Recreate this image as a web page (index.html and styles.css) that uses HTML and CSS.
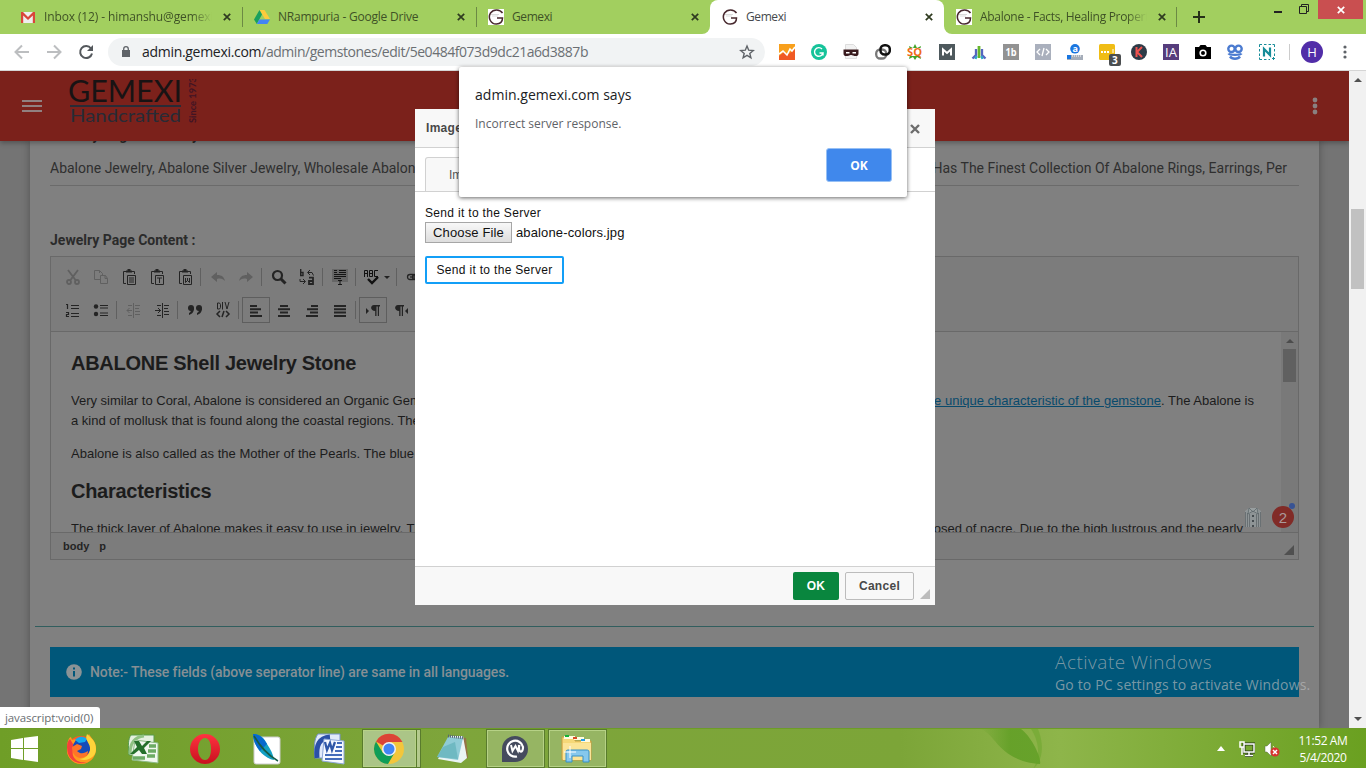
FILE: index.html
```html
<!DOCTYPE html>
<html lang="en">
<head>
<meta charset="utf-8">
<title>Gemexi</title>
<link rel="stylesheet" href="styles.css">
</head>
<body>
<div class="screen">
  <div class="tabs">
    <div class="tab">
      <svg class="fav" viewBox="0 0 16 16"><path d="M1 3h14v11H1z" fill="#eee"/><path d="M1 3h2l5 5 5-5h2v11h-2.200V6.500L8 11 3.200 6.500V14H1z" fill="#d9453a"/></svg>
      <span class="tab-title t1">Inbox (12) - himanshu@gemexi.com</span><svg class="x" viewBox="0 0 8 8"><path d="M.8.8l6.400 6.400M7.200.8L.8 7.200"/></svg>
    </div>
    <div class="tab sep">
      <svg class="fav" viewBox="0 0 16 16"><path d="M5.500 1h5l5.500 9h-5z" fill="#fecb3c"/><path d="M5.500 1L0 10.500 2.800 15 8 5.600z" fill="#18a05e"/><path d="M5.300 10.500H16L13.300 15H2.800z" fill="#4285f4"/></svg>
      <span class="tab-title t2">NRampuria - Google Drive</span><svg class="x" viewBox="0 0 8 8"><path d="M.8.8l6.400 6.400M7.200.8L.8 7.200"/></svg>
    </div>
    <div class="tab sep">
      <svg class="fav w" viewBox="0 0 16 16"><path d="M0 0h16v16H0z" fill="#fff"/><path d="M14.500 4C12 0 5.500-.3 2.500 4-.5 9 3 15.300 8.500 15c3.500-.2 6-2.500 6-6H9" fill="none" stroke="#47282e" stroke-width="1.500"/><path d="M3 5.500h8M4 7h6" stroke="#ccc" stroke-width=".7"/></svg>
      <span class="tab-title t3">Gemexi</span><svg class="x" viewBox="0 0 8 8"><path d="M.8.8l6.400 6.400M7.200.8L.8 7.200"/></svg>
    </div>
    <div class="tab active">
      <svg class="fav w" viewBox="0 0 16 16"><path d="M14.500 4C12 0 5.500-.3 2.500 4-.5 9 3 15.300 8.500 15c3.500-.2 6-2.500 6-6H9" fill="none" stroke="#47282e" stroke-width="1.500"/><path d="M3 5.500h8M4 7h6" stroke="#ccc" stroke-width=".7"/></svg>
      <span class="tab-title t4">Gemexi</span><svg class="x" viewBox="0 0 8 8"><path d="M.8.8l6.400 6.400M7.200.8L.8 7.200"/></svg>
    </div>
    <div class="tab last">
      <svg class="fav w" viewBox="0 0 16 16"><path d="M0 0h16v16H0z" fill="#fff"/><path d="M14.500 4C12 0 5.500-.3 2.500 4-.5 9 3 15.300 8.500 15c3.500-.2 6-2.500 6-6H9" fill="none" stroke="#47282e" stroke-width="1.500"/><path d="M3 5.500h8M4 7h6" stroke="#ccc" stroke-width=".7"/></svg>
      <span class="tab-title t5">Abalone - Facts, Healing Properties</span><svg class="x" viewBox="0 0 8 8"><path d="M.8.8l6.400 6.400M7.200.8L.8 7.200"/></svg>
    </div>
    <svg class="plus" viewBox="0 0 12 12"><path d="M6 0v12M0 6h12"/></svg>
    <div class="win">
      <svg class="wmin" viewBox="0 0 8 2"><path d="M0 0h8v2H0z" fill="#222"/></svg>
      <svg class="wres" viewBox="0 0 10 10"><path d="M.5 2.500h7v7h-7zM2.500 2.500v-2h7v7h-2" fill="none" stroke="#222"/></svg>
      <div class="wclose"><svg viewBox="0 0 8 8"><path d="M.8.8l6.400 6.400M7.200.8L.8 7.200" stroke="#fff" stroke-width="1.700"/></svg></div>
    </div>
  </div>

  <div class="bar">
    <svg class="nav" viewBox="0 0 16 16"><path d="M15 8H2M8 1.500L1.500 8 8 14.500" fill="none" stroke="#bcbec0" stroke-width="2"/></svg>
    <svg class="nav" viewBox="0 0 16 16"><path d="M1 8h13M8 1.500L14.500 8 8 14.500" fill="none" stroke="#bcbec0" stroke-width="2"/></svg>
    <svg class="nav" viewBox="0 0 16 16"><path d="M13 4.500A6 6 0 1 0 14 9.500" fill="none" stroke="#54585c" stroke-width="2"/><path d="M15 1v6H9z" fill="#54585c"/></svg>
    <div class="omni">
      <svg class="lock" viewBox="0 0 8 12"><path d="M0 4h8v7H0z" fill="#5f6368"/><path d="M1.700 5V3a2.300 2.300 0 0 1 4.600 0v2" fill="none" stroke="#5f6368" stroke-width="1.300"/></svg>
      <span class="url"><b>admin.gemexi.com</b>/admin/gemstones/edit/5e0484f073d9dc21a6d3887b</span>
      <svg class="star" viewBox="0 0 16 16"><path d="M8 2l1.700 4.200 4.600.3-3.500 2.900 1.100 4.400L8 11.400l-3.900 2.400 1.100-4.400L1.700 6.500l4.600-.3z" fill="none" stroke="#5f6368" stroke-width="1.400"/></svg>
    </div>
    <div class="exts">
      <svg viewBox="0 0 16 16"><path d="M0 0h16v16H0z" fill="#f8a01c"/><path d="M0 12l5-4 3 3 8-6v11H0z" fill="#f05a24"/><path d="M0 10l4-3 4 4 3-6 2 2 3-4" fill="none" stroke="#fff" stroke-width="1.600"/></svg>
      <svg viewBox="0 0 16 16"><circle cx="8" cy="8" r="8" fill="#15c39a"/><path d="M11 5a4.300 4.300 0 1 0 1 4H8.500M12 9v2.500" fill="none" stroke="#fff" stroke-width="1.400"/></svg>
      <svg viewBox="0 0 16 16"><path d="M2.500.5h8l3 3v11h-11z" fill="#f2f2f2" stroke="#ddd"/><path d="M.5 5.500h15v4c0 2-1 2.500-3 2.500-3 0-3-1-4.500-1s-1.500 1-4.500 1c-2 0-3-.5-3-2.500z" fill="#381a1d"/><path d="M3 8h3.500v1.500H3zM9.500 8H13v1.500H9.500z" fill="#fff"/></svg>
      <svg viewBox="0 0 16 16" fill="none"><rect x="1.200" y="5.500" width="10" height="9" rx="4" stroke="#777" stroke-width="2.300"/><rect x="5.500" y="1.300" width="9.300" height="9.300" rx="4" stroke="#111" stroke-width="2.500"/></svg>
      <svg viewBox="0 0 16 16"><path d="M2 2l4 2 2-4 2 4 4-2-1 4H3zM3 11h10l1 4-4-2-2 3-2-3-4 2z" fill="#43a329"/><path d="M1 4h14v8H1z" fill="#fff"/><text x="0" y="12" font-size="11" font-weight="bold" fill="#f06a17" textLength="15" lengthAdjust="spacingAndGlyphs">SQ</text></svg>
      <svg viewBox="0 0 16 16"><path d="M0 0h16v16H0z" fill="#4e595d"/><path d="M4 11.500V5.500L8 9l4-3.500v6" fill="none" stroke="#fff" stroke-width="2"/></svg>
      <svg viewBox="0 0 16 16" fill="none" stroke-width="2.300"><path d="M5 5v6l-3.500 3.500" stroke="#5665c0"/><path d="M11 5v6l3.500 3.500" stroke="#5665c0"/><path d="M8 2v12" stroke="#65b62c" stroke-width="2.800"/><path d="M5.500 12l-1 3M10.500 12l1 3" stroke="#31a8c9"/></svg>
      <svg viewBox="0 0 16 16"><path d="M0 0h16v16H0z" fill="#929292"/><text x="2.500" y="12" font-size="11" font-weight="bold" fill="#fff" textLength="11" lengthAdjust="spacingAndGlyphs">1b</text></svg>
      <svg viewBox="0 0 16 16"><path d="M0 0h16v16H0z" fill="#aab0bd"/><path d="M5 5L2 8l3 3M11 5l3 3-3 3M9 4l-2 8" fill="none" stroke="#fff" stroke-width="1.300"/></svg>
      <svg viewBox="0 0 16 16"><circle cx="8" cy="4.800" r="4.800" fill="#1976e0"/><text x="5.400" y="7.500" font-size="9" font-weight="bold" fill="#fff">a</text><path d="M0 11h16v5H0z" fill="#a5adb9"/><path d="M0 11h4v4H0z" fill="#1976e0"/><path d="M5 12h10" stroke="#fff" stroke-dasharray="1"/></svg>
      <svg class="over" viewBox="0 0 16 16"><rect width="16" height="16" rx="1.500" fill="#f0bd15"/><path d="M2 8h9" stroke="#fff" stroke-width="2" stroke-dasharray="2 1"/><path d="M14 5v4" stroke="#fff"/><rect x="10" y="10" width="12" height="12" rx="2" fill="#4b4e50"/><text x="13" y="20" font-size="10" font-weight="bold" fill="#fff">3</text></svg>
      <svg viewBox="0 0 16 16"><circle cx="8" cy="8" r="8" fill="#2d3b47"/><path d="M5.500 3v10M11 3L6 8l5 5" fill="none" stroke="#ef5350" stroke-width="2"/></svg>
      <svg viewBox="0 0 16 16"><path d="M0 0h16v16H0z" fill="#563d7c"/><text x="2" y="13" font-size="13" fill="#fff" textLength="12" lengthAdjust="spacingAndGlyphs">IA</text></svg>
      <svg viewBox="0 0 16 16"><path d="M0 3h4l1.500-2h5L12 3h4v12H0z" fill="#000"/><circle cx="8" cy="9" r="2.800" fill="none" stroke="#fff" stroke-width="1.600"/></svg>
      <svg viewBox="0 0 16 16" fill="none" stroke="#4b7bd0"><circle cx="4.500" cy="4.800" r="3.200" stroke-width="2.400"/><circle cx="11.500" cy="4.800" r="3.200" stroke-width="2.400"/><path d="M1.500 9.500c1 1.800 12 1.800 13 0M3 12.500c2 3 8 3 10 0" stroke-width="2.400"/></svg>
      <svg viewBox="0 0 16 16" fill="none" stroke="#168c99"><path d="M.5 3V.5H3M5 .5h2.500M9.500.5H12M13.500.500h2V3M15.500 5v2.500M15.500 9.500V12M.5 5v2.500M.5 9.500V12M.5 13.500v2H3M5 15.500h2.500M9.500 15.500H11M14.500 13v3M13 14.500h3"/><path d="M5 12.500V5l6 6V3.500" stroke-width="2.200"/></svg>
    </div>
    <i class="vline"></i><span class="avatar">H</span>
    <svg class="dots" viewBox="0 0 4 14"><circle cx="2" cy="2" r="1.600"/><circle cx="2" cy="7" r="1.600"/><circle cx="2" cy="12" r="1.600"/></svg>
  </div>

  <div class="viewport">
    <div class="page">
      <header class="head">
        <svg class="burger" viewBox="0 0 20 12"><path d="M0 1h20M0 6h20M0 11h20" stroke="#918080" stroke-width="2"/></svg>
        <div class="logo">
          <svg width="130" height="48" viewBox="0 0 130 48">
            <text class="lg1" x="-1" y="23" textLength="114" lengthAdjust="spacingAndGlyphs">GEMEXI</text>
            <path d="M1 27h111" stroke="#282b36" stroke-width="2"/>
            <text class="lg2" x="1" y="43" textLength="111" lengthAdjust="spacingAndGlyphs">Handcrafted</text>
            <text class="lg3" transform="translate(127 44) rotate(-90)" textLength="46" lengthAdjust="spacingAndGlyphs">Since 1973</text>
          </svg>
        </div>
        <svg class="hdots" viewBox="0 0 6 18" fill="#8a8080"><circle cx="3" cy="3" r="2.400"/><circle cx="3" cy="9" r="2.400"/><circle cx="3" cy="15" r="2.400"/></svg>
      </header>
      <main class="main">
        <div class="card">
          <div class="label cut">Jewelry Page Summary :</div>
          <div class="field"><span class="fl">Abalone Jewelry, Abalone Silver Jewelry, Wholesale Abalone</span><span class="fr">Has The Finest Collection Of Abalone Rings, Earrings, Per</span></div>
          <div class="label">Jewelry Page Content :</div>
          <div class="editor">
            <div class="tools">
              <div class="row">
                <span class="dis"><svg viewBox="0 0 16 16" fill="none" stroke="currentColor" stroke-width="1.800"><path d="M3 1l7.500 10M13 1L5.500 11"/><circle cx="4" cy="13" r="2"/><circle cx="12" cy="13" r="2"/></svg></span>
                <span class="dis"><svg viewBox="0 0 16 16" fill="none" stroke="currentColor"><path d="M7 10.500H1.500v-9h5l3 3V6M7.500 6.500h5l2 3v5h-7zM12 6.500v3h2.500M6.500 1.500V4"/></svg></span>
                <span><svg viewBox="0 0 16 16" fill="none" stroke="currentColor"><path d="M5 2.500H2.500v12H5M11 2.500h2.500V5M6.500 6.500h8v9h-8zM8 9h5M8 11h5M8 13h5"/><path d="M5 2.500h6M6.500 1h3" stroke-width="2"/></svg></span>
                <span><svg viewBox="0 0 16 16" fill="none" stroke="currentColor"><path d="M5 2.500H2.500v12H5M11 2.500h2.500V5M6.500 6.500h8v9h-8zM8 9h5M10.500 9v5"/><path d="M5 2.500h6M6.500 1h3" stroke-width="2"/></svg></span>
                <span><svg viewBox="0 0 16 16" fill="none" stroke="currentColor"><path d="M5 2.500H2.500v12H5M11 2.500h2.500V5M6.500 6.500h8v9h-8zM8.500 9v4.500l2-2 2 2V9M10.500 9v3"/><path d="M5 2.500h6M6.500 1h3" stroke-width="2"/></svg></span><i></i>
                <span class="dis"><svg viewBox="0 0 16 16"><path d="M1 8l6-5v3c5 0 7 2 8 6-2-2-4-3-8-2v3z" fill="currentColor"/></svg></span>
                <span class="dis"><svg viewBox="0 0 16 16"><path d="M15 8L9 3v3c-5 0-7 2-8 6 2-2 4-3 8-2v3z" fill="currentColor"/></svg></span><i></i>
                <span><svg viewBox="0 0 16 16" fill="none" stroke="currentColor"><circle cx="6.500" cy="6.500" r="4.500" stroke-width="2.200"/><path d="M10 10l4.500 4.500" stroke-width="3"/></svg></span>
                <span><svg viewBox="0 0 16 16" fill="none" stroke="currentColor"><path d="M1.700 0v7M1 3.500h3v3H1" stroke-width="1.400"/><path d="M9 3.500h4l1.500 3M11 1L8.500 3.500 11 6M1 10v2.500h5M4 10l2.500 2.500L4 15"/><path d="M10 8.700h4V15h-4v-3h4" stroke-width="1.800"/></svg></span><i></i>
                <span><svg viewBox="0 0 16 16" fill="none" stroke="#151515"><path d="M0 0h16v13H0z" fill="#666" stroke="none"/><path d="M2 1.500h3M7 1.500h7M2 3.500h3M7 3.500h7M2 5.500h12M2 7.500h12M2 9.500h7M8 11v4M6 11.500h4M6 15.500h4"/></svg></span><i></i>
                <span class="wide"><svg width="20" height="16" viewBox="0 0 20 16" fill="none" stroke="#111"><path d="M.5 8V1.500h3V8M.5 4.500h3M5.500 7.500v-6h3v6zM5.500 4.500h3M14 1.500h-3.500v6H14"/><path d="M4 10l4 4 6-6" stroke-width="2.400"/></svg><svg class="car" viewBox="0 0 6 3"><path d="M0 0h6L3 3z"/></svg></span><i></i>
                <span><svg viewBox="0 0 16 16" fill="none" stroke="currentColor" stroke-width="1.300"><rect x="1.500" y="5.500" width="8" height="5" rx="2.500"/><rect x="6.500" y="5.500" width="8" height="5" rx="2.500"/><path d="M4 8h8"/></svg></span>
              </div>
              <div class="row">
                <span><svg viewBox="0 0 16 16" fill="none" stroke="currentColor"><path d="M1 2.500h1.500V7M1 10.500h2.500v2H1.500v2H4M6 3.500h8M6 6.500h8M6 11.500h8M6 14.500h8" stroke-width="1.200"/></svg></span>
                <span><svg viewBox="0 0 16 16"><circle cx="3" cy="4.500" r="2.200" fill="currentColor"/><circle cx="3" cy="12" r="2.200" fill="currentColor"/><path d="M7 3.500h8M7 6h8M7 11h8M7 13.500h8" stroke="currentColor" stroke-width="1.200"/></svg></span><i></i>
                <span class="dis"><svg viewBox="0 0 16 16" fill="none" stroke="currentColor"><path d="M7.500 1v15M9 3.500h5M9 6.500h4M9 9.500h5M9 12.500h5M6 8.500H1M3.500 6L1 8.500 3.500 11M2 3.500h4M2 13.500h4"/></svg></span>
                <span><svg viewBox="0 0 16 16" fill="none" stroke="currentColor"><path d="M8.500 1v15M10 3.500h5M10 6.500h4M10 9.500h5M10 12.500h5M1 8.500h6M4 6l2.500 2.500L4 11M3 3.500h4M3 13.500h4"/></svg></span><i></i>
                <span><svg viewBox="0 0 16 16" fill="currentColor"><circle cx="4" cy="6" r="3"/><circle cx="12" cy="6" r="3"/><path d="M7 6c0 4-2 6-5 7v-2c2-1 2-2 2-5zM15 6c0 4-2 6-5 7v-2c2-1 2-2 2-5z"/></svg></span>
                <span><svg viewBox="0 0 16 16" fill="none" stroke="currentColor"><path d="M2.500 1v6h2l1-1.500v-3L4.500 1zM7.500 0v7.500M10 0l2 7 2-7"/><path d="M5 9l-3 3 3 3M11 9l3 3-3 3M9 9l-2 6" stroke-width="1.500"/></svg></span><i></i>
                <span class="on"><svg viewBox="0 0 16 16" stroke="currentColor" stroke-width="2"><path d="M2 4h7M2 7.300h11M2 10.600h8M2 14h12"/></svg></span>
                <span><svg viewBox="0 0 16 16" stroke="currentColor" stroke-width="2"><path d="M4 4h8M2 7.300h12M4 10.600h8M2 14h12"/></svg></span>
                <span><svg viewBox="0 0 16 16" stroke="currentColor" stroke-width="2"><path d="M7 4h7M3 7.300h11M6 10.600h8M2 14h12"/></svg></span>
                <span><svg viewBox="0 0 16 16" stroke="currentColor" stroke-width="2"><path d="M2 4h12M2 7.300h12M2 10.600h12M2 14h12"/></svg></span><i></i>
                <span class="on"><svg viewBox="0 0 16 16" fill="currentColor"><path d="M1 6l3 3-3 3zM9 3h6v1.500h-1V14h-1.200V4.500h-1.300V14h-1.300V9C5 9 5 3 9 3z"/></svg></span>
                <span><svg viewBox="0 0 16 16" fill="currentColor"><path d="M15 6l-3 3 3 3zM5 3h6v1.500h-1V14H8.800V4.500H7.500V14H6.200V9C1 9 1 3 5 3z"/></svg></span>
              </div>
            </div>
            <div class="content">
              <div class="doc">
                <h2>ABALONE Shell Jewelry Stone</h2>
                <div class="ln"><span>Very similar to Coral, Abalone is considered an Organic Gem</span><span><a>the unique characteristic of the gemstone</a>. The Abalone is</span></div>
                <div class="ln"><span>a kind of mollusk that is found along the coastal regions. The</span></div>
                <div class="ln gap"><span>Abalone is also called as the Mother of the Pearls. The blue</span></div>
                <h2 class="h2b">Characteristics</h2>
                <div class="ln last-ln"><span>The thick layer of Abalone makes it easy to use in jewelry. The</span><span>composed of nacre. Due to the high lustrous and the pearly</span></div>
              </div>
              <div class="sb"><svg viewBox="0 0 8 4"><path d="M0 4l4-4 4 4z" fill="#4c4c4c"/></svg><b></b></div>
              <div class="badges">
                <svg width="18" height="20" viewBox="0 0 18 20"><path d="M1 4l4-3h8l4 3v16H1z" fill="#8e9496"/><path d="M1.500 5v15M3.500 6v14M5.500 7v13M12.500 7v13M14.500 6v14M16.500 5v15" stroke="#697073"/><path d="M5 1l4 4 4-4M5 1L4 7l5-3 5 3-1-6" fill="#989e9f" stroke="#5e686c" stroke-width=".8"/><path d="M9 8v12" stroke="#454c50" stroke-width="2" stroke-dasharray="2 3"/></svg>
                <span class="two">2</span>
              </div>
            </div>
            <div class="path"><span>body</span><span>p</span><svg viewBox="0 0 10 10"><path d="M10 0v10H0z" fill="#505050"/></svg></div>
          </div>
          <div class="teal"></div>
          <div class="note"><svg viewBox="0 0 16 16"><circle cx="8" cy="8" r="7.800" fill="#8b9396"/><path d="M7 3.500h2v2H7zM7 7h2v5.500H7z" fill="#00577a"/></svg>Note:- These fields (above seperator line) are same in all languages.</div>
        </div>
      </main>
    </div>
    <div class="scroll"><svg viewBox="0 0 8 4"><path d="M0 4l4-4 4 4z" fill="#505050"/></svg><b></b><svg viewBox="0 0 8 4"><path d="M0 0l4 4 4-4z" fill="#505050"/></svg></div>

    <section class="dialog">
      <div class="dh"><span>Image Properties</span><svg viewBox="0 0 10 10"><path d="M1 1l8 8M9 1L1 9" stroke="#6d6d6d" stroke-width="2.400"/></svg></div>
      <div class="dt"><span>Image Info</span></div>
      <div class="db">
        <div class="dl">Send it to the Server</div>
        <div class="file"><span class="choose">Choose File</span><span>abalone-colors.jpg</span></div>
        <div class="send">Send it to the Server</div>
      </div>
      <div class="df"><span class="ok">OK</span><span class="cancel">Cancel</span><svg viewBox="0 0 10 10"><path d="M10 0v10H0z" fill="#bcbcbc"/></svg></div>
    </section>
    <section class="alert">
      <div class="at">admin.gemexi.com says</div>
      <div class="am">Incorrect server response.</div>
      <span class="aok">OK</span>
    </section>
    <div class="status">javascript:void(0)</div>
    <div class="water"><div class="w1">Activate Windows</div><div class="w2">Go to PC settings to activate Windows.</div></div>
  </div>

  <footer class="task">
    <svg class="leaf" width="100" height="40" viewBox="0 0 100 40"><defs><linearGradient id="lf"><stop stop-color="#5b9c21" stop-opacity="0"/><stop offset=".5" stop-color="#5b9c21"/></linearGradient></defs><path d="M6 0c16 4 18 32 60 35C68 28 56 6 47 0z" fill="url(#lf)" opacity=".75"/><path d="M57 0c8 12 10 28 2 40 12-10 10-28 5-40z" fill="#67a329" opacity=".45"/></svg>
    <span class="start"><svg width="28" height="26" viewBox="0 0 28 26"><path d="M0 4l12-2v10H0zM13 1.800L27 0v12H13zM0 13h12v11L0 22zM13 13h14v13l-14-2z" fill="#fff"/></svg></span>
    <span class="slot"><svg viewBox="0 0 32 32"><circle cx="16" cy="17" r="14" fill="#ff5a24"/><path d="M2 15C2 7 5 4 6 4l1 3 4-1C8 12 12 14 12 17c0 6 9 9 14 3 3-4 1-9-2-11-2-3-2-6 0-8 2 4 7 7 7 15 0 8-6 15-15 15S1 23 2 15z" fill="#ff9a1f"/><path d="M2 14c0 16 14 18 20 15-10 2-16-5-14-12l3-1-3-5-3-5C3 8 2 10 2 14z" fill="#f5403a"/><circle cx="17" cy="14" r="9" fill="#174bb8"/><path d="M10 7c4-5 10-3 12-1l-2 3-6 1z" fill="#15a9ee"/><path d="M22 1c-3 7 4 9 3 16-1 5-5 9-11 9 9 3 17-2 17-10S26 5 22 1z" fill="#ffd43a"/><path d="M7 14l5-3 5 2-1 3-4 2c4 4 8 2 11 0 0 4-3 7-8 7-5-1-8-5-8-11z" fill="#ff7428"/></svg></span>
    <span class="slot"><svg viewBox="0 0 32 32"><path d="M4 2h23v20H2C1 12 1 6 4 2z" fill="#e4f0df" stroke="#579b4b"/><path d="M3 21C3 10 7 4 17 3" fill="none" stroke="#8fc283" stroke-width="3"/><path d="M8 7l23 3v20L5 27z" fill="#f1f8ef" stroke="#8dbc85"/><path d="M22 13h7M21 18h8M20 23h8M6 25h12" stroke="#6cab64" stroke-width="3.500"/><path d="M7 8h5l3 5 5-5h4l-7 7 3 6h-5l-3-4-5 4H3l7-7z" fill="#25702b"/></svg></span>
    <span class="slot"><svg viewBox="0 0 32 32"><defs><linearGradient id="op" x2="0" y2="1"><stop stop-color="#ff3340"/><stop offset="1" stop-color="#c8101e"/></linearGradient></defs><path fill-rule="evenodd" d="M16 1a15 15 0 1 0 0 30 15 15 0 0 0 0-30zm0 4c4 0 6 5 6 11s-2 11-6 11-7-5-7-11 3-11 7-11z" fill="url(#op)"/></svg></span>
    <span class="slot"><svg viewBox="0 0 32 32"><rect x="3" y="4" width="26" height="27" rx="2" fill="#fff" stroke="#ccc"/><path d="M2 1c7 0 12 5 14 10 4 6 6 10 7 16C13 25 3 15 2 1z" fill="#13a0c4"/><path d="M2 1c7 0 10 4 14 10l-7 7C4 12 2 7 2 1z" fill="#0768ce"/><path d="M3 3c6 10 12 18 24 25" fill="none" stroke="#165b46" stroke-width="1.500"/></svg></span>
    <span class="slot"><svg viewBox="0 0 32 32"><path d="M5 1h22v24H2C1 14 1 6 5 1z" fill="#e1eafa" stroke="#7692cd"/><path d="M4 25C3 12 6 5 17 4" fill="none" stroke="#2b50a7" stroke-width="5"/><path d="M11 6l20 2v23L9 28z" fill="#f6f9ff" stroke="#8da7d9"/><path d="M12 9l2 8 3-7 2 7 3-8" fill="none" stroke="#2f57a8" stroke-width="2.300"/><path d="M24 10h5M23 14h6M22 18h7M12 22h17M12 26h17" stroke="#426bba" stroke-width="2"/></svg></span>
    <span class="slot"><span class="stack"><span class="open lit"><svg viewBox="0 0 32 32"><circle cx="16" cy="16" r="15" fill="#f3c63b"/><path d="M16 16L3 8.500A15 15 0 0 1 29.500 9H16z" fill="#db4437"/><path d="M3 8.500A15 15 0 0 0 15 31l7-12-12 1z" fill="#0f9d58"/><circle cx="16" cy="16" r="7" fill="#f1f1f1"/><circle cx="16" cy="16" r="5.500" fill="#4285f4"/></svg></span></span></span>
    <span class="slot"><svg viewBox="0 0 32 32"><path d="M13 3l16 2 2 20-6 2z" fill="#957246"/><path d="M13 3h13l4 22-6 5L1 26z" fill="#eaf4f5"/><path d="M11 4l15 1-5 22L0 24z" fill="#8fcbd6"/><path d="M6 14l12-5 3 17L0 24z" fill="#50a7ad" opacity=".5"/><path d="M11 3l16 2" stroke="#567" stroke-width="3" stroke-dasharray="1"/></svg></span>
    <span class="slot"><span class="open"><svg class="wp" viewBox="0 0 32 32"><path d="M3 29V16A13 13 0 1 1 16 29z" fill="#454b5e"/><path d="M18 23.500A8 8 0 1 1 24 14c0 6-4 6-4 1v-3" fill="none" stroke="#fff" stroke-width="2.200"/><path d="M12 12l1.500 6 3-5 2.500 5 1.500-6" fill="none" stroke="#fff" stroke-width="2"/></svg></span></span>
    <span class="slot"><span class="open"><svg viewBox="0 0 32 32"><path d="M1 4h13v4h16v19H1z" fill="#f5d878" stroke="#c99c40"/><path d="M3 3h11v3H3zM13 4h10v3H13zM20 6h9v3h-9z" fill="#fffbe0"/><path d="M4 2h4v2H4z" fill="#10b335"/><path d="M12 4h4v2h-4z" fill="#d94a25"/><path d="M20 6h4v2h-4z" fill="#259de5"/><path d="M2 10h28v17H2z" fill="#fbe497"/><path d="M5 29V19c0-2 1-2 3-2h17c2 0 3 0 3 2v10h-6v-6H11v6z" fill="#86c8ed" stroke="#3690c5"/><path d="M9 13v12M3 19h12" stroke="#fff"/></svg></span></span>
    <div class="tray">
      <svg width="8" height="5" viewBox="0 0 8 5"><path d="M0 5l4-5 4 5z" fill="#fff"/></svg>
      <svg class="net" width="16" height="16" viewBox="0 0 16 16"><path d="M5 3h10v8H5zM10 11v3M6 14.500h8" fill="none" stroke="#233614" stroke-width="3"/><path d="M5 3h10v8H5zM10 11v3M6 14.500h8M1 1h4v5H1zM3 6v8" fill="none" stroke="#fff" stroke-width="1.500"/></svg>
      <svg class="vol" width="16" height="16" viewBox="0 0 16 16"><path d="M1 5h2l4-4v14l-4-4H1z" fill="#fff" stroke="#5a6944" stroke-width=".5"/><path d="M9 5c2 2 2 4 0 6" fill="none" stroke="#fff"/><circle cx="11" cy="11" r="4.500" fill="#d8332e"/><path d="M9 9l4 4M13 9l-4 4" stroke="#fff" stroke-width="1.500"/></svg>
      <div class="clock"><div class="c1">11:52 AM</div><div class="c2">5/4/2020</div></div>
    </div>
  </footer>
</div>
</body>
</html>
```
FILE: styles.css
```css
* { box-sizing: border-box; }
body { margin: 0; font-family: "Open Sans", "Noto Sans", sans-serif; overflow: hidden; }
svg { display: block; flex: none; }
.screen { width: 1366px; height: 768px; display: flex; flex-direction: column; overflow: hidden; }

/* browser tabs */
.tabs { height: 34px; display: flex; padding-left: 8px; flex: none; background: linear-gradient(#fff, #fff) 690px 10px / 270px 24px no-repeat #a2cf5f; }
.tab { width: 234px; height: 34px; display: flex; align-items: center; padding: 0 11px 0 12px; flex: none; background: #a2cf5f; position: relative; }
.tab.sep::before, .tab.last::after { content: ""; position: absolute; left: 0; top: 7px; width: 1px; height: 20px; background: #6c8a44; }
.tab.last::after { left: auto; right: 0; }
.tab.last { width: 233px; border-bottom-left-radius: 8px; }
.tab:nth-child(3) { border-bottom-right-radius: 8px; }
.tab.active { background: #fff; border-radius: 8px 8px 0 0; }
.fav { width: 16px; height: 16px; margin-right: 8px; }
.tab-title { flex: 1; font-size: 12px; color: #3f5226; white-space: nowrap; overflow: hidden; margin-right: 11px; line-height: 16px; }
.active .tab-title { color: #45494d; }
.t1 { letter-spacing: -.12px; -webkit-mask-image: linear-gradient(90deg, #000 88%, transparent); }
.t5 { letter-spacing: -.3px; -webkit-mask-image: linear-gradient(90deg, #000 88%, transparent); }
.t2 { letter-spacing: -.22px; }
.t3, .t4 { letter-spacing: -.4px; }
.x { width: 8px; height: 8px; stroke: #2f3b20; stroke-width: 1.7; }
.plus { width: 12px; height: 12px; margin: 11px 0 0 16px; stroke: #263018; stroke-width: 2; }
.win { margin-left: auto; display: flex; padding-right: 3px; }
.wmin { width: 8px; height: 2px; margin: 11px 17px 0 0; }
.wres { width: 10px; height: 10px; margin: 4px 9px 0 0; }
.wclose { width: 45px; height: 19px; background: #c94f50; display: flex; align-items: center; justify-content: center; }
.wclose svg { width: 8px; height: 8px; }

/* address bar */
.bar { height: 37px; flex: none; background: #fff; border-bottom: 1px solid #d5d5d5; display: flex; align-items: center; padding-left: 14px; }
.nav { width: 16px; height: 16px; margin-right: 16px; }
.omni { width: 657px; height: 28px; border-radius: 14px; background: #f1f3f4; display: flex; align-items: center; padding: 0 10px 0 14px; margin-left: -2px; }
.lock { width: 8px; height: 12px; margin-right: 12px; }
.url { font-size: 14px; color: #6b6f73; flex: 1; letter-spacing: -.46px; line-height: 18px; margin-top: -1px; }
.url b { font-weight: 400; color: #202124; letter-spacing: -.3px; }
.star { width: 16px; height: 16px; }
.exts { display: flex; gap: 16px; margin-left: 14px; }
.exts svg { width: 16px; height: 16px; }
.exts .over { overflow: visible; }
.vline { width: 1px; height: 16px; background: #ccc; margin: 0 11px 0 14px; }
.avatar { width: 22px; height: 22px; border-radius: 50%; background: #512da8; color: #fff; font-size: 13px; display: flex; align-items: center; justify-content: center; }
.dots { width: 4px; height: 14px; fill: #5f6368; margin-left: 20px; }

/* web page */
.viewport { flex: 1; display: flex; position: relative; min-height: 0; }
.page { width: 1349px; display: flex; flex-direction: column; background: #747474; overflow: hidden; }
.head { height: 70px; flex: none; background: #7b211b; display: flex; align-items: center; padding: 0 31px 0 22px; box-shadow: 0 2px 5px rgba(0,0,0,.3); position: relative; }
.burger { width: 20px; height: 12px; }
.logo { margin: -6px 0 0 27px; }
.logo text { font-family: "Lato", sans-serif; }
.lg1 { font-size: 30px; fill: #181314; }
.lg2 { font-size: 17px; fill: #282b36; }
.lg3 { font-size: 10px; font-weight: 700; fill: #411424; }
.hdots { width: 6px; height: 18px; margin-left: auto; }
.main { flex: 1; min-height: 0; padding: 0 30px; }
.card { height: 587px; background: #808080; box-shadow: 0 0 8px rgba(0,0,0,.3); padding: 0 20px; font-family: "Roboto", sans-serif; overflow: hidden; }
.label { font-size: 14px; font-weight: 700; color: #2b2b2b; line-height: 20px; margin-top: 44px; }
.cut { margin-top: -16px; }
.field { height: 37px; margin-top: 4px; border-bottom: 1px solid #6b6b6b; font-size: 14px; line-height: 38px; color: #2f2f2f; display: flex; justify-content: space-between; padding-right: 12px; white-space: nowrap; }
.fl { width: 368px; overflow: hidden; }
.editor { margin-top: 6px; height: 304px; border: 1px solid #696969; display: flex; flex-direction: column; font-family: "Liberation Sans", Arial, sans-serif; }
.tools { height: 75px; background: #7c7c7c; border-bottom: 1px solid #696969; padding: 7px 8px 0; }
.row { display: flex; height: 26px; margin-bottom: 7px; color: #242424; width: 370px; overflow: hidden; }
.row span { width: 28px; flex: none; height: 26px; display: flex; align-items: center; justify-content: center; }
.row span > svg { width: 16px; height: 16px; }
.row .dis { color: #606060; }
.row .on { border: 1px solid #5e5e5e; }
.row .wide { width: 36px; }
.row .wide > svg:first-child { width: 20px; }
.row .wide .car { width: 6px; height: 3px; fill: #222; }
.row i { width: 5px; flex: none; height: 18px; margin-top: 4px; border-left: 1px solid #606060; margin-left: 1px; margin-right: -1px; }
.content { height: 201px; display: flex; position: relative; overflow: hidden; border-bottom: 1px solid #696969; flex: none; }
.doc { flex: 1; padding: 19px 27px 0 20px; font-size: 13px; color: #1c1c1c; overflow: hidden; }
.doc h2 { margin: 0 0 16px; font-size: 20px; line-height: 24px; letter-spacing: -.27px; }
.ln { display: flex; justify-content: space-between; line-height: 20px; white-space: nowrap; }
.ln span:first-child { width: 346px; overflow: hidden; }
.ln.gap { margin: 13px 0 15px; }
.ln a { color: #084a6c; text-decoration: underline; }
.last-ln { padding-right: 11px; }
.sb { width: 17px; background: #797979; display: flex; flex-direction: column; align-items: center; padding-top: 7px; }
.sb svg { width: 8px; height: 4px; }
.sb b { width: 13px; height: 33px; background: #606060; margin-top: 6px; }
.badges { position: absolute; right: 4px; bottom: 4px; display: flex; gap: 10px; align-items: center; }
.two { width: 22px; height: 22px; border-radius: 50%; background: #812b27; color: #a99; font-size: 15px; display: flex; align-items: center; justify-content: center; position: relative; }
.two::after { content: ""; position: absolute; width: 6px; height: 6px; border-radius: 50%; background: #385394; right: -1px; top: -3px; }
.path { flex: 1; background: #7c7c7c; display: flex; align-items: center; gap: 10px; font-size: 11px; font-weight: 700; color: #242424; padding: 0 4px 0 12px; }
.path svg { width: 10px; height: 10px; margin: 8px 0 0 auto; }
.teal { border-top: 1px solid #315e5e; margin: 66px -15px 0; }
.note { margin-top: 20px; height: 50px; background: #00577a; display: flex; align-items: center; font-size: 14px; font-weight: 500; color: #868f94; padding: 0 0 1px 16px; letter-spacing: -.08px; }
.note svg { width: 16px; height: 16px; margin-right: 8px; }
.scroll { width: 17px; background: #f1f1f1; display: flex; flex-direction: column; align-items: center; padding: 7px 0; }
.scroll svg { width: 8px; height: 4px; }
.scroll b { width: 13px; height: 80px; background: #c1c1c1; margin: 127px 0 auto; }

/* editor dialog */
.dialog { position: absolute; left: 415px; top: 38px; width: 520px; height: 496px; background: #fff; display: flex; flex-direction: column; font-family: "Liberation Sans", Arial, sans-serif; font-size: 12px; color: #111; }
.dh { height: 39px; background: #f8f8f8; border-bottom: 1px solid #d1d1d1; display: flex; align-items: center; justify-content: space-between; padding: 0 15px 0 11px; font-weight: 700; color: #484848; letter-spacing: .3px; }
.dh span { width: 33px; overflow: hidden; white-space: nowrap; }
.dh svg { width: 10px; height: 10px; margin-top: 2px; }
.dt { height: 44px; border-bottom: 1px solid #d1d1d1; display: flex; align-items: flex-end; padding-left: 10px; }
.dt span { width: 104px; height: 34px; border: 1px solid #d1d1d1; border-bottom: 0; border-radius: 3px 3px 0 0; background: #f8f8f8; padding-left: 23px; line-height: 34px; color: #555; }
.db { flex: 1; padding: 13px 10px; }
.dl { line-height: 16px; letter-spacing: .32px; }
.file { display: flex; align-items: center; gap: 4px; height: 22px; font-size: 13px; letter-spacing: .13px; }
.choose { width: 87px; height: 21px; border: 1px solid #a6a6a6; background: linear-gradient(#f8f8f8, #ddd); display: flex; align-items: center; justify-content: center; }
.send { width: 139px; height: 28px; margin-top: 13px; border: 2px solid #139ff7; border-radius: 2px; line-height: 24px; text-align: center; letter-spacing: .32px; }
.df { height: 39px; background: #f8f8f8; border-top: 1px solid #d1d1d1; display: flex; align-items: center; justify-content: flex-end; gap: 6px; padding-right: 5px; font-weight: 700; letter-spacing: .3px; }
.df span { height: 28px; display: flex; align-items: center; justify-content: center; border-radius: 2px; }
.ok { width: 46px; background: #09863e; color: #fff; }
.cancel { width: 69px; border: 1px solid #bcbcbc; color: #484848; }
.df svg { width: 10px; height: 10px; margin-top: 16px; }

/* alert box */
.alert { position: absolute; left: 459px; top: -4px; width: 448px; height: 130px; background: #fff; border-radius: 2px; box-shadow: 0 1px 4px rgba(0,0,0,.6); padding: 18px 16px; display: flex; flex-direction: column; }
.at { font-size: 14px; line-height: 20px; color: #202124; letter-spacing: .03px; }
.am { font-size: 12px; line-height: 18px; margin-top: 10px; color: #5f6368; }
.aok { margin: 15px -1px 0 auto; width: 66px; height: 34px; border-radius: 3px; background: #4088ec; border: 1px solid #96c0f5; color: #fff; font-size: 12px; font-weight: 700; display: flex; align-items: center; justify-content: center; flex: none; }
.status { position: absolute; left: 0; bottom: 0; width: 100px; height: 21px; background: #fff; border-top-right-radius: 3px; padding-left: 5px; font-size: 11.5px; line-height: 21px; color: #696d71; white-space: nowrap; letter-spacing: -.1px; }
.water { position: absolute; left: 1055px; top: 578px; white-space: nowrap; color: rgba(190,190,190,.65); }
.w1 { font-size: 19px; line-height: 26px; font-weight: 300; letter-spacing: .5px; }
.w2 { font-size: 14px; line-height: 20px; letter-spacing: .16px; }

/* taskbar */
.task { height: 40px; flex: none; display: flex; position: relative; background: linear-gradient(90deg, #6f9e27 0, #7ea53b 450px, #7ca538 900px, #8eb54a 1060px, #6aa020 1366px); border-top: 1px solid #6d9c28; }
.leaf { position: absolute; left: 974px; top: 0; }
.start { width: 50px; display: flex; align-items: center; justify-content: center; flex: none; }
.slot { width: 62px; flex: none; display: flex; align-items: center; justify-content: center; }
.slot svg { width: 32px; height: 32px; }
.open { width: 59px; height: 39px; border: 1px solid #597b2d; box-shadow: inset 0 0 0 1px #b6d186; background: #96b563; display: flex; align-items: center; justify-content: center; }
.stack { border: 1px solid #597b2d; width: 59px; background: #b4ca8e; }
.lit { width: 54px; height: 37px; background: #abc587; border-width: 0 1px 0 0; }
.tray { margin-left: auto; display: flex; align-items: center; padding-right: 18px; }
.net { margin-left: 14px; }
.vol { margin-left: 9px; }
.clock { width: 50px; margin-left: 18px; color: #fff; font-size: 12px; line-height: 17px; text-align: center; white-space: nowrap; display: flex; flex-direction: column; align-items: center; }
.clock div { letter-spacing: -.4px; }
```
